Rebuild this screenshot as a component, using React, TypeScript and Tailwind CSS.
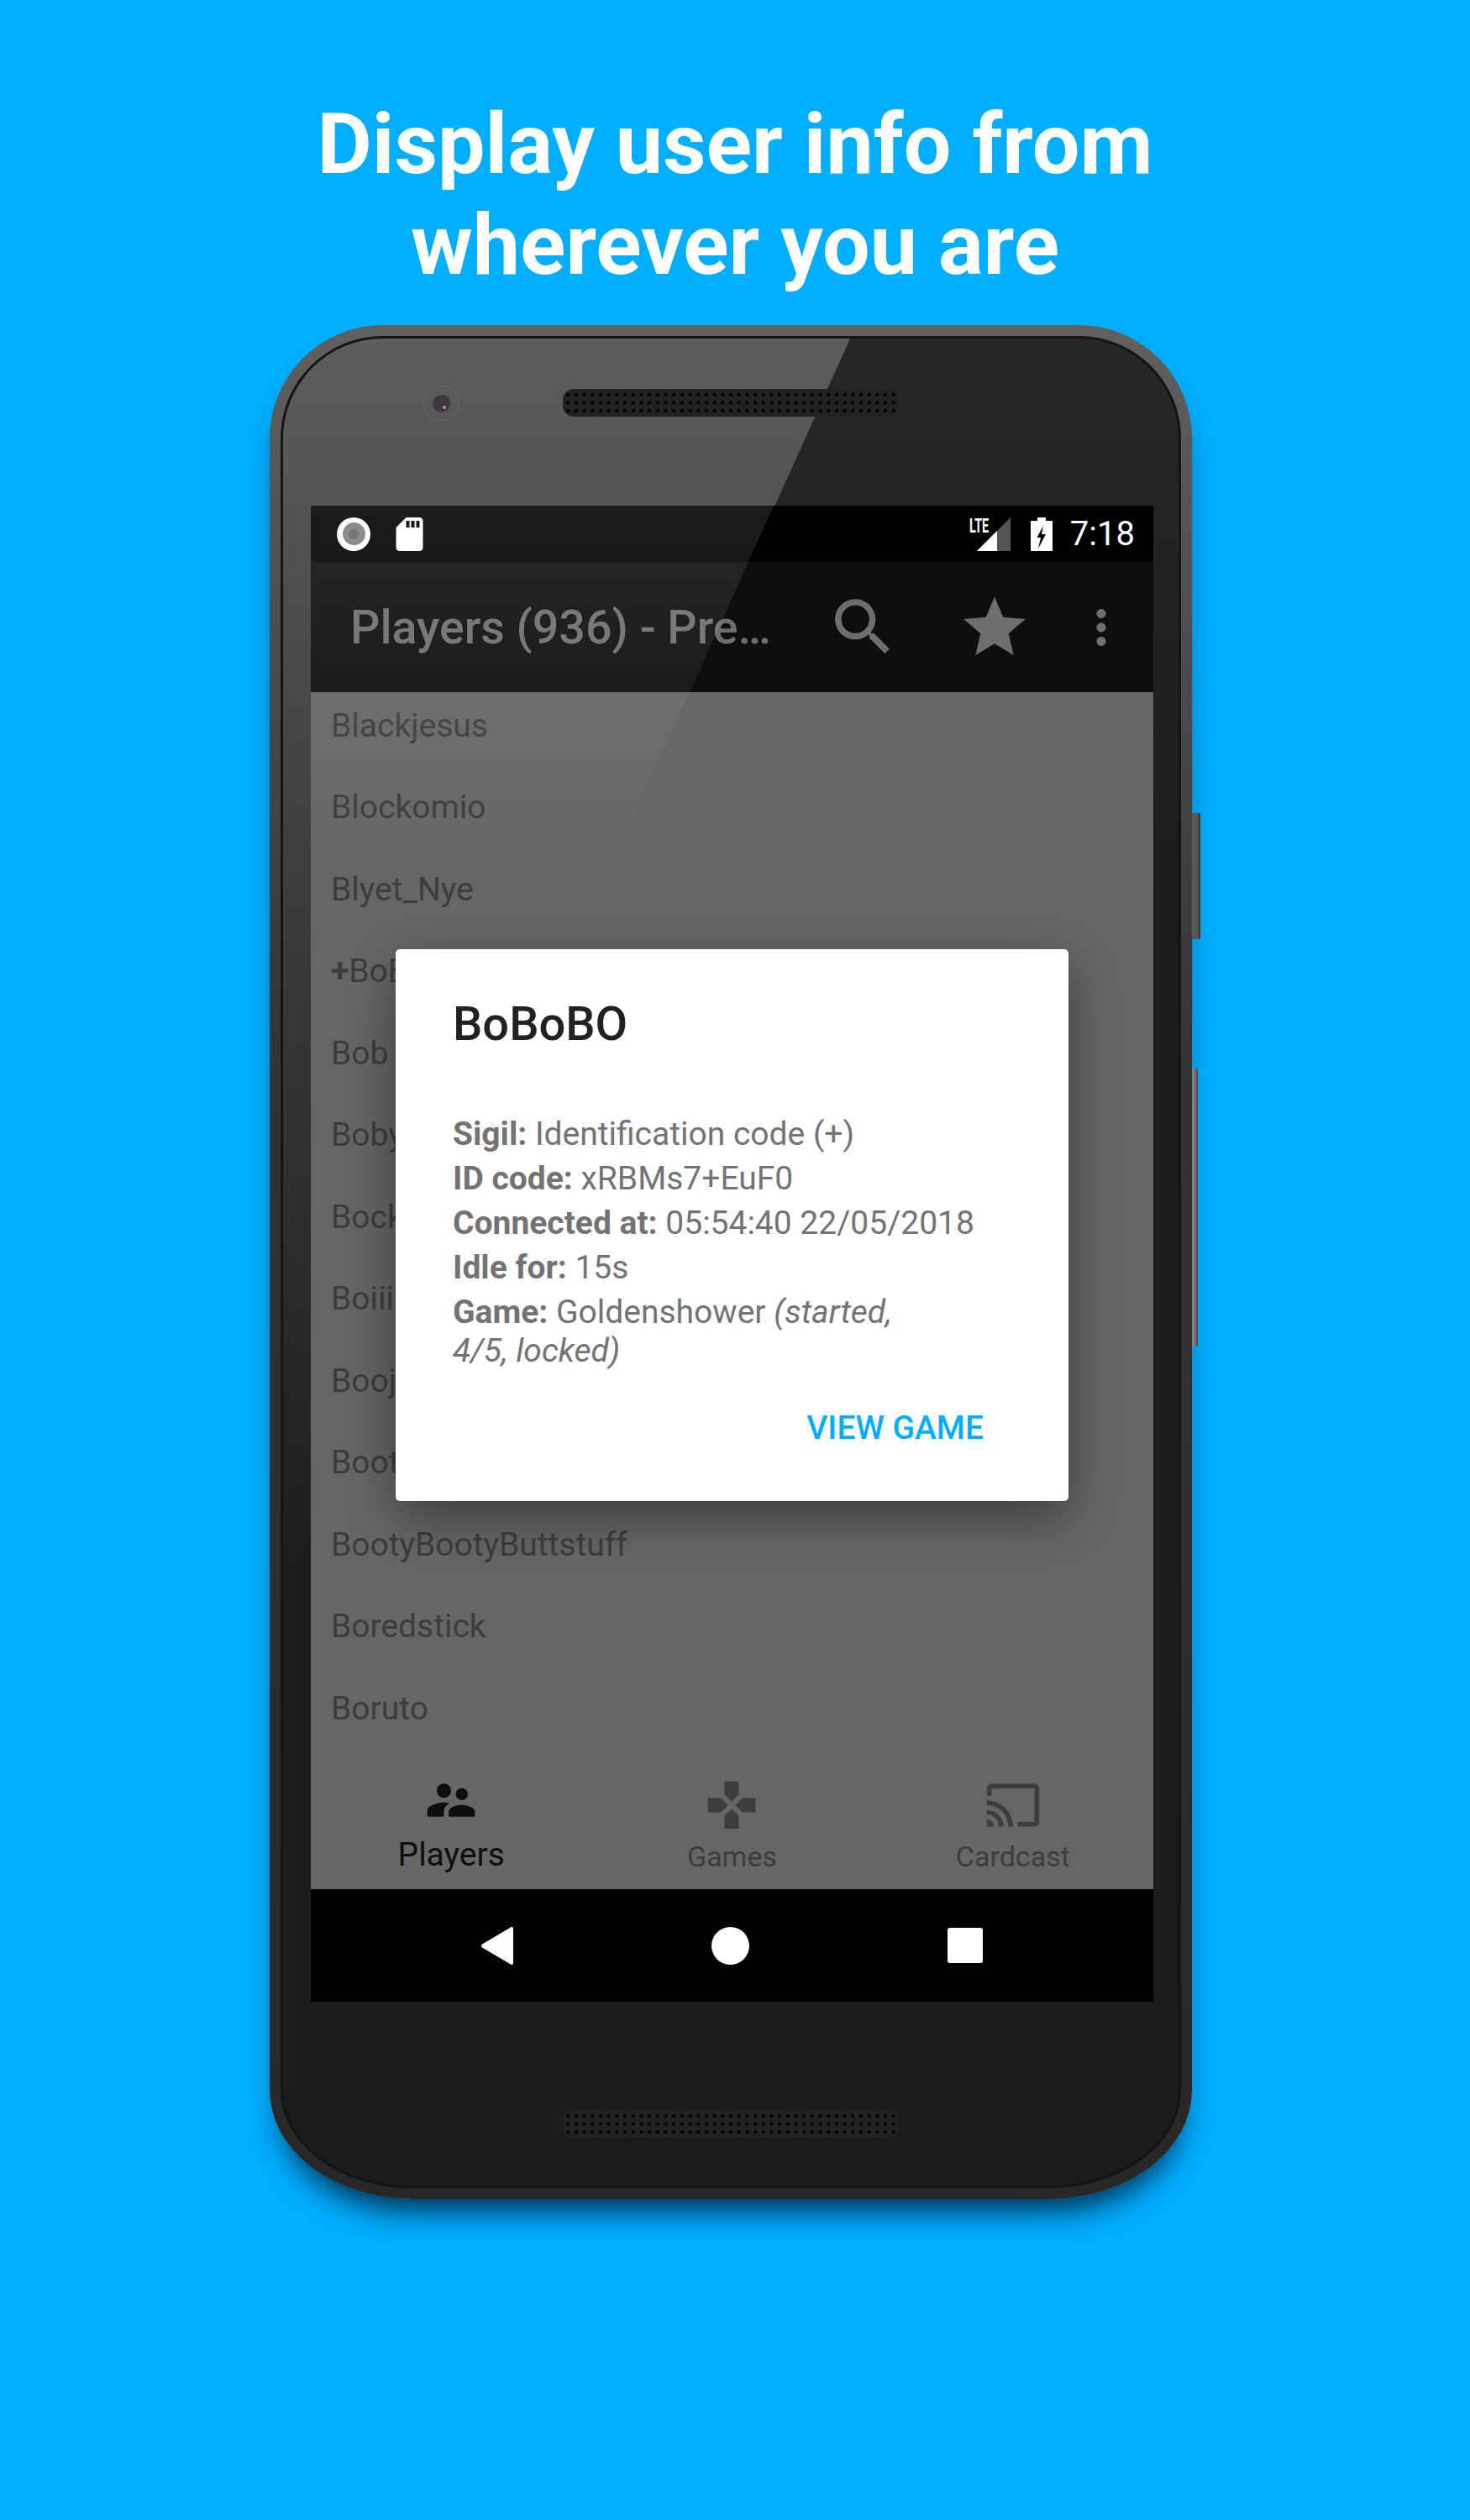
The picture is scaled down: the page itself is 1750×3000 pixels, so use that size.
const players = [
  "Blackjesus",
  "Blockomio",
  "Blyet_Nye",
  "BoBoBO",
  "Bob",
  "Boby",
  "Bock",
  "Boiii",
  "Booj",
  "Boot",
  "BootyBootyButtstuff",
  "Boredstick",
  "Boruto",
];

const details = [
  { label: "Sigil:", value: "Identification code (+)" },
  { label: "ID code:", value: "xRBMs7+EuF0" },
  { label: "Connected at:", value: "05:54:40 22/05/2018" },
  { label: "Idle for:", value: "15s" },
];

function Speaker({ className }: { className: string }) {
  return (
    <div
      className={`h-[33px] w-[400px] rounded-[13px] bg-[#222] bg-[radial-gradient(circle,#000_1.7px,transparent_2.4px)] bg-[size:9.7px_9.5px] bg-center ${className}`}
    />
  );
}

function StatusBar() {
  return (
    <div className="flex h-[67px] items-center bg-black pl-[31px] pr-[22px]">
      <div className="flex h-[40px] w-[40px] items-center justify-center rounded-full bg-white">
        <div className="flex h-[27px] w-[27px] items-center justify-center rounded-full bg-[#7f7f7f]">
          <div className="h-[12px] w-[12px] rounded-full bg-[#666]" />
        </div>
      </div>
      <svg className="ml-[30px]" width="33" height="40" viewBox="4 2 16 20" fill="#fff">
        <path d="M18 2h-8L4.02 8 4 20c0 1.1.9 2 2 2h12c1.1 0 2-.9 2-2V4c0-1.1-.9-2-2-2zm-6 6h-2V4h2v4zm3 0h-2V4h2v4zm3 0h-2V4h2v4z" />
      </svg>
      <div className="relative ml-auto flex h-[40px] w-[50px] items-center">
        <svg className="absolute left-[9px] top-0" width="41" height="40" viewBox="0 0 41 40">
          <polygon points="0,40 40,0 40,40" fill="#555" />
          <polygon points="0,40 24,16 24,40" fill="#fff" />
        </svg>
        <span className="absolute left-0 top-[-4px] origin-left scale-x-[0.6] text-[24px] font-bold leading-[28px] text-white">
          LTE
        </span>
      </div>
      <svg className="ml-[23px]" width="26" height="40" viewBox="0 0 26 40">
        <path
          fillRule="evenodd"
          fill="#fff"
          d="M8 0h10v4h8v36H0V4h8zM15 10L7.5 24H12L9 37l9-17h-5z"
        />
      </svg>
      <span className="ml-[21px] text-[40px] leading-none text-white">7:18</span>
    </div>
  );
}

function AppBar() {
  return (
    <div className="flex h-[155px] items-center bg-[#0e0e0e] pl-[47px]">
      <span className="mt-[3px] w-[566px] text-[55.5px] font-medium leading-none text-[#6e6e6e]">
        Players (936) - Pre…
      </span>
      <svg width="89" height="89" viewBox="0 0 24 24" fill="#6e6e6e">
        <path d="M15.5 14h-.79l-.28-.27C15.41 12.59 16 11.11 16 9.5 16 5.91 13.09 3 9.5 3S3 5.91 3 9.5 5.91 16 9.5 16c1.61 0 3.09-.59 4.23-1.57l.27.28v.79l5 4.99L20.49 19l-4.99-5zm-6 0C7.01 14 5 11.99 5 9.5S7.01 5 9.5 5 14 7.01 14 9.5 11.99 14 9.5 14z" />
      </svg>
      <svg className="ml-[68px]" width="88" height="88" viewBox="0 0 24 24" fill="#6e6e6e">
        <path d="M12 17.27L18.18 21l-1.64-7.03L22 9.24l-7.19-.61L12 2 9.19 8.63 2 9.24l5.46 4.73L5.82 21z" />
      </svg>
      <svg className="ml-[50px]" width="66" height="66" viewBox="0 0 24 24" fill="#6e6e6e">
        <path d="M12 8c1.1 0 2-.9 2-2s-.9-2-2-2-2 .9-2 2 .9 2 2 2zm0 2c-1.1 0-2 .9-2 2s.9 2 2 2 2-.9 2-2-.9-2-2-2zm0 6c-1.1 0-2 .9-2 2s.9 2 2 2 2-.9 2-2-.9-2-2-2z" />
      </svg>
    </div>
  );
}

function BottomTabs() {
  return (
    <div className="grid h-[159px] grid-cols-3 bg-[#666]">
      <div className="flex flex-col items-center pt-[19px] text-[#0e0e0e]">
        <svg width="68" height="68" viewBox="0 0 24 24" fill="currentColor">
          <path d="M16.5 12c1.38 0 2.49-1.12 2.49-2.5S17.88 7 16.5 7C15.12 7 14 8.12 14 9.5s1.12 2.5 2.5 2.5zM9 11c1.66 0 2.99-1.34 2.99-3S10.66 5 9 5C7.34 5 6 6.34 6 8s1.34 3 3 3zm7.5 3c-1.83 0-5.5.92-5.5 2.75V19h11v-2.25c0-1.83-3.67-2.75-5.5-2.75zM9 13c-2.33 0-7 1.17-7 3.5V19h7v-2.25c0-.85.33-2.34 2.37-3.47C10.5 13.1 9.66 13 9 13z" />
        </svg>
        <span className="mt-[10px] text-[39px] leading-[42px]">Players</span>
      </div>
      <div className="flex flex-col items-center pt-[25px] text-[#3d3d3d]">
        <svg width="68" height="68" viewBox="0 0 24 24" fill="currentColor">
          <path d="M15 7.5V2H9v5.5l3 3 3-3zM7.5 9H2v6h5.5l3-3-3-3zM9 16.5V22h6v-5.5l-3-3-3 3zM16.5 9l-3 3 3 3H22V9h-5.5z" />
        </svg>
        <span className="mt-[8px] text-[34px] leading-[38px]">Games</span>
      </div>
      <div className="flex flex-col items-center pt-[25px] text-[#3d3d3d]">
        <svg width="68" height="68" viewBox="0 0 24 24" fill="currentColor">
          <path d="M21 3H3c-1.1 0-2 .9-2 2v3h2V5h18v14h-7v2h7c1.1 0 2-.9 2-2V5c0-1.1-.9-2-2-2zM1 18v3h3c0-1.66-1.34-3-3-3zm0-4v2c2.76 0 5 2.24 5 5h2c0-3.87-3.13-7-7-7zm0-4v2c4.97 0 9 4.03 9 9h2c0-6.08-4.93-11-11-11z" />
        </svg>
        <span className="mt-[8px] text-[34px] leading-[38px]">Cardcast</span>
      </div>
    </div>
  );
}

function NavBar() {
  return (
    <div className="flex h-[134px] items-center justify-center gap-[236px] bg-black">
      <svg width="38" height="45" viewBox="0 0 38 45" fill="#fff">
        <path d="M38 2v41c0 2-2 2.500-3 1.500L1 24.500c-1.300-1-1.300-3 0-4L35 .5c1-1 3-.5 3 1.500z" />
      </svg>
      <div className="h-[45px] w-[45px] rounded-full bg-white" />
      <div className="h-[42px] w-[42px] rounded-[3px] bg-white" />
    </div>
  );
}

function PlayerDialog() {
  return (
    <div className="absolute left-[101px] top-[528px] z-20 h-[657px] w-[801px] rounded-[5px] bg-white pl-[68px] pr-[101px] pt-[57px] shadow-[0_20px_60px_rgba(0,0,0,0.4)]">
      <h2 className="text-[56px] font-medium leading-[64px] text-[#212121]">BoBoBO</h2>
      <div className="mt-[76px] text-[39px] leading-[46px] text-[#737373]">
        {details.map((row) => (
          <p key={row.label} className="mb-[7px]">
            <b className="font-bold">{row.label}</b> {row.value}
          </p>
        ))}
        <p>
          <b className="font-bold">Game:</b> Goldenshower <i>(started,</i>
          <br />
          <i>4/5, locked)</i>
        </p>
      </div>
      <div className="mt-[46px] text-right text-[39px] font-medium leading-[46px] text-[#00aeff]">
        VIEW GAME
      </div>
    </div>
  );
}

function Screen() {
  return (
    <div className="relative z-10 ml-[3px] mt-[106px] flex h-[1781px] w-[1003px] flex-col overflow-hidden">
      <StatusBar />
      <AppBar />
      <div className="flex-1 overflow-hidden bg-[#666] px-[24px]">
        <div className="-mt-[9px]">
          {players.map((name, i) => (
            <div key={i} className="flex h-[97.5px] items-center text-[39px] text-[#3d3d3d]">
              {name === "BoBoBO" && <b className="font-bold">+</b>}
              {name}
            </div>
          ))}
        </div>
      </div>
      <BottomTabs />
      <NavBar />
      {/* reflection across the glass */}
      <div className="pointer-events-none absolute left-0 top-0 z-10 h-[1224px] w-[551px] bg-gradient-to-b from-white/[0.11] to-transparent to-[36%] [clip-path:polygon(0_0,100%_0,0_100%)]" />
      <PlayerDialog />
    </div>
  );
}

export default function App() {
  return (
    <div
      className="flex h-[3000px] flex-col items-center overflow-hidden bg-[#00aeff] pt-[112px]"
      style={{ fontFamily: "Roboto, sans-serif" }}
    >
      <h1 className="text-center text-[100.5px] font-bold leading-[120px] text-white">
        Display user info from
        <br />
        wherever you are
      </h1>
      <div className="mt-[35px] flex w-[1108px]">
        <div className="relative h-[2231px] w-[1098px] shrink-0 rounded-[135px_135px_170px_170px/135px_135px_130px_130px] bg-gradient-to-b from-[#606060] via-[#333] via-40% to-[#272727] p-[13px] shadow-[0_28px_36px_-16px_rgba(0,15,35,0.85)]">
          <div className="relative flex h-full flex-col items-center overflow-hidden rounded-[122px_122px_157px_157px/122px_122px_117px_117px] border-[3px] border-[#141414] bg-gradient-to-b from-[#272727] to-[#1c1c1c] to-30%">
            {/* bezel sheen */}
            <div className="pointer-events-none absolute left-0 top-0 h-[1500px] w-[675px] bg-gradient-to-b from-white/[0.25] to-transparent [clip-path:polygon(0_0,100%_0,0_100%)]" />
            <Speaker className="relative mt-[60px]" />
            <div className="absolute left-[167px] top-[56px] flex h-[42px] w-[42px] items-center justify-center rounded-full border border-[#777]/60">
              <div className="relative h-[21px] w-[21px] rounded-full bg-[#3a3a42]">
                <div className="absolute left-[12px] top-[13px] h-[4px] w-[4px] rounded-full bg-[#d98a6e]" />
              </div>
            </div>
            <Screen />
            <Speaker className="relative mt-[129px]" />
          </div>
        </div>
        <div className="flex w-[10px] flex-col items-start pt-[581px]">
          <div className="h-[150px] w-[10px] rounded-r-[2px] bg-gradient-to-r from-[#6a6a6a] via-[#5a5a5a] via-70% to-[#2a2a2a]" />
          <div className="mt-[154px] h-[331px] w-[7px] rounded-r-[2px] bg-gradient-to-r from-[#999] via-[#888] via-50% to-[#444]" />
        </div>
      </div>
    </div>
  );
}
